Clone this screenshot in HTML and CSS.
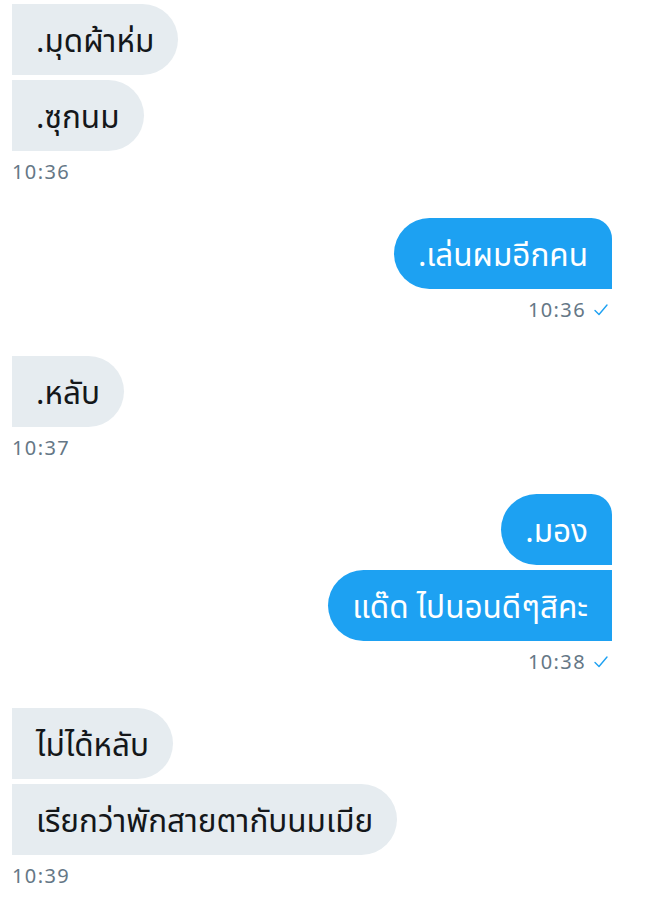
FILE: index.html
```html
<!DOCTYPE html>
<html lang="th">
<head>
<meta charset="utf-8">
<link rel="stylesheet" href="styles.css">
</head>
<body>
<div class="chat">
  <div class="group recv">
    <div class="bubble">.มุดผ้าห่ม</div>
    <div class="bubble">.ซุกนม</div>
    <div class="time">10:36</div>
  </div>
  <div class="group sent">
    <div class="bubble first">.เล่นผมอีกคน</div>
    <div class="time">10:36 <svg class="check" viewBox="0 0 14 12" width="14" height="12"><polyline points="1,6.5 5,10.5 13,1" fill="none" stroke="#1da1f2" stroke-width="1.4" stroke-linecap="round" stroke-linejoin="round"/></svg></div>
  </div>
  <div class="group recv">
    <div class="bubble">.หลับ</div>
    <div class="time">10:37</div>
  </div>
  <div class="group sent">
    <div class="bubble first">.มอง</div>
    <div class="bubble">แด๊ด ไปนอนดีๆสิคะ</div>
    <div class="time">10:38 <svg class="check" viewBox="0 0 14 12" width="14" height="12"><polyline points="1,6.5 5,10.5 13,1" fill="none" stroke="#1da1f2" stroke-width="1.4" stroke-linecap="round" stroke-linejoin="round"/></svg></div>
  </div>
  <div class="group recv">
    <div class="bubble">ไม่ได้หลับ</div>
    <div class="bubble">เรียกว่าพักสายตากับนมเมีย</div>
    <div class="time">10:39</div>
  </div>
</div>
</body>
</html>
```

FILE: styles.css
```css
html, body {
  margin: 0;
  padding: 0;
  background: #ffffff;
}
body {
  font-family: "Noto Sans", "Noto Sans Thai", "Liberation Sans", sans-serif;
}
.chat {
  padding: 4px 33px 0 12px;
  display: flex;
  flex-direction: column;
  gap: 35px;
}
.group {
  display: flex;
  flex-direction: column;
  gap: 5px;
}
.group.recv { align-items: flex-start; }
.group.sent { align-items: flex-end; }
.bubble {
  font-size: 31.5px;
  line-height: 35px;
  height: 35px;
  padding: 18px 24px;
  white-space: nowrap;
}
.recv .bubble {
  background: #e6ecf0;
  color: #14171a;
  border-radius: 0 36px 36px 0;
}
.sent .bubble {
  background: #1da1f2;
  color: #ffffff;
  border-radius: 36px 0 0 36px;
}
.sent .bubble.first {
  border-radius: 36px 21px 0 36px;
}
.time {
  margin-top: 5px;
  font-size: 20px;
  line-height: 22px;
  letter-spacing: 1.4px;
  color: #657786;
  display: flex;
  align-items: center;
  gap: 8px;
}
.sent .time { margin-right: 4px; }
.check { display: block; }
```
